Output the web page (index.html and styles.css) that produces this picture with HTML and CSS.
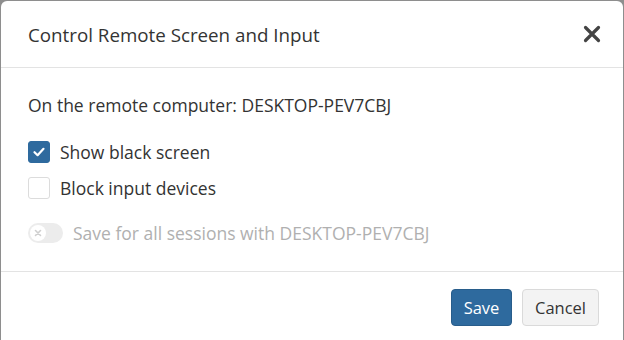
FILE: index.html
```html
<!DOCTYPE html>
<html lang="en">
<head>
  <meta charset="UTF-8" />
  <title>Control Remote Screen and Input</title>
  <link rel="stylesheet" href="styles.css">
</head>
<body>
  <div class="dialog">
    <div class="dialog-header">
      <h2>Control Remote Screen and Input</h2>
      <button class="close" aria-label="Close">
        <svg width="18" height="18" viewBox="0 0 18 18">
          <path d="M2.5 2.5 L15.5 15.5 M15.5 2.5 L2.5 15.5" stroke="#444" stroke-width="3.2" stroke-linecap="round"/>
        </svg>
      </button>
    </div>

    <div class="dialog-body">
      <p class="remote">On the remote computer: DESKTOP-PEV7CBJ</p>

      <label class="check">
        <span class="box checked">
          <svg width="14" height="14" viewBox="0 0 14 14">
            <path d="M2.5 7.2 L5.6 10.2 L11.5 3.8" fill="none" stroke="#fff" stroke-width="2.2" stroke-linecap="round" stroke-linejoin="round"/>
          </svg>
        </span>
        Show black screen
      </label>

      <label class="check">
        <span class="box"></span>
        Block input devices
      </label>

      <label class="toggle disabled">
        <span class="switch">
          <span class="knob">
            <svg width="10" height="10" viewBox="0 0 10 10">
              <path d="M2.5 2.5 L7.5 7.5 M7.5 2.5 L2.5 7.5" stroke="#cfcfcf" stroke-width="1.6" stroke-linecap="round"/>
            </svg>
          </span>
        </span>
        Save for all sessions with DESKTOP-PEV7CBJ
      </label>
    </div>

    <div class="dialog-footer">
      <button class="btn primary">Save</button>
      <button class="btn cancel">Cancel</button>
    </div>
  </div>
</body>
</html>
```

FILE: styles.css
```css
* {
  box-sizing: border-box;
}
html, body {
  height: 100%;
}
body {
  margin: 0;
  background: #8e8e8e;
  font-family: 'Open Sans', sans-serif;
  color: #333;
  padding: 1px 1px 0 1px;
}

.dialog {
  background: #fff;
  border-radius: 6px 6px 0 0;
  height: 100%;
  display: flex;
  flex-direction: column;
}

.dialog-header {
  display: flex;
  align-items: center;
  justify-content: space-between;
  height: 67px;
  flex: none;
  padding: 0 22px 0 27px;
  border-bottom: 1px solid #e3e3e3;
}
.dialog-header h2 {
  margin: 0;
  font-size: 18.75px;
  font-weight: 400;
  color: #333;
}
.close {
  border: none;
  background: none;
  padding: 0;
  width: 18px;
  height: 18px;
  cursor: pointer;
}

.dialog-body {
  padding: 25px 27px 0 27px;
  height: 204px;
  flex: none;
  border-bottom: 1px solid #e3e3e3;
}
.remote {
  margin: 0 0 24px 0;
  font-size: 17.5px;
  line-height: 24px;
}

.check, .toggle {
  display: flex;
  align-items: center;
  gap: 10px;
  font-size: 17.5px;
  line-height: 24px;
  height: 22px;
  margin-bottom: 14px;
}
.box {
  width: 22px;
  height: 22px;
  border: 1px solid #dcdcdc;
  border-radius: 3px;
  display: flex;
  align-items: center;
  justify-content: center;
}
.box.checked {
  background: #2e6a9e;
  border-color: #2e6a9e;
}

.toggle {
  margin-top: 23px;
}
.toggle.disabled {
  color: #b0b0b0;
}
.switch {
  width: 35px;
  height: 20px;
  border-radius: 10px;
  background: #ececec;
  display: flex;
  align-items: center;
  padding: 2px;
}
.knob {
  width: 16px;
  height: 16px;
  border-radius: 50%;
  background: #fff;
  display: flex;
  align-items: center;
  justify-content: center;
}

.dialog-footer {
  display: flex;
  justify-content: flex-end;
  gap: 10px;
  padding: 17px 24px 0 0;
}
.btn {
  font-family: 'Open Sans', sans-serif;
  font-size: 16.5px;
  height: 37px;
  padding: 0;
  border: 1px solid #dadada;
  border-radius: 4px;
  background: #f3f3f3;
  color: #333;
  cursor: pointer;
}
.btn.primary {
  background: #2e6a9e;
  border-color: #285d8b;
  color: #fff;
  width: 61px;
}
.btn.cancel {
  width: 77px;
}
```
